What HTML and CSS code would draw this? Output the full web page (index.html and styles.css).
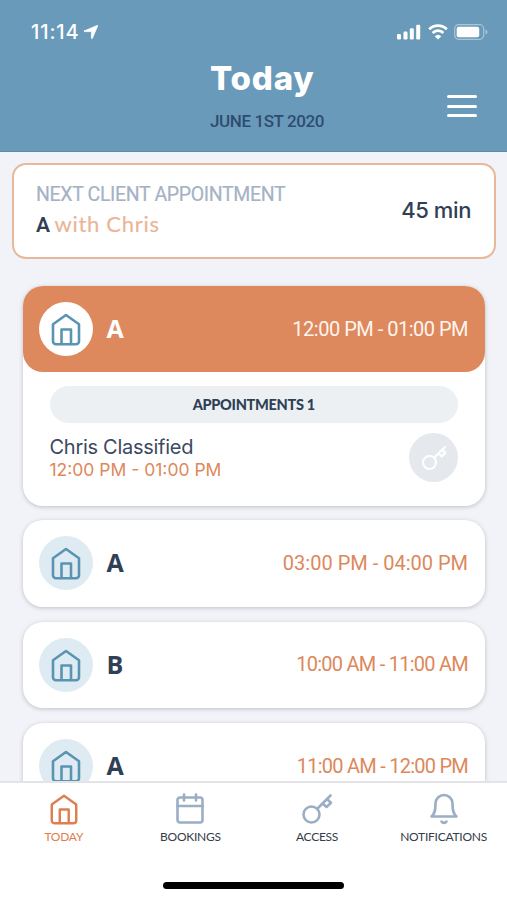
FILE: index.html
```html
<!DOCTYPE html>
<html lang="en">
<head>
<meta charset="utf-8">
<meta name="viewport" content="width=device-width, initial-scale=1">
<title>Today</title>
<link rel="stylesheet" href="styles.css">
</head>
<body>
<svg class="defs" width="0" height="0" aria-hidden="true">
  <symbol id="home" viewBox="0 0 32 34"><path d="M3 12.2 16 3l13 9.2v17a3 3 0 0 1-3 3H6a3 3 0 0 1-3-3z"/><path d="M11.5 32V17.5h9.500V32"/></symbol>
  <symbol id="calendar" viewBox="0 0 30 32"><rect x="2.500" y="4.500" width="25" height="25" rx="2.500"/><path d="M2.500 13h25M9 1.500v6M21 1.500v6"/></symbol>
  <symbol id="key" viewBox="0 0 32 32"><circle cx="10.500" cy="21.500" r="8"/><path d="M16.500 15.500 29.500 2.500M26.500 6.500l3.500 3.200-4.500 4.300-4-3.500"/></symbol>
  <symbol id="bell" viewBox="0 0 30 32"><path d="M2.500 23.500c3.500-3 4-6.500 4-13a8.500 8.500 0 0 1 17 0c0 6.500.5 10 4 13zM12.500 28.500a3 3 0 0 0 5 0"/></symbol>
</svg>
<div class="app">
  <header class="header">
    <div class="status">
      <span class="clock">11:14</span>
      <svg class="location" viewBox="0 0 14 14"><path d="M.4 5.900 13.200.4Q14 .2 13.600 1L8.300 13.400Q7.700 14.300 7.400 13.200V7.200Q7.400 6.600 6.800 6.600H.7Q-.5 6.400.4 5.900z"/></svg>
      <svg class="signal" viewBox="0 0 24 16"><rect x="0" y="10" width="4" height="5.500" rx="1.200"/><rect x="6.500" y="7.500" width="4" height="8" rx="1.200"/><rect x="12.800" y="4.200" width="4" height="11.300" rx="1.200"/><rect x="19.200" y=".8" width="4" height="14.700" rx="1.200"/></svg>
      <svg class="wifi" viewBox="0 0 20 16"><path d="M1.200 5.300a12.300 12.300 0 0 1 17.600 0M4.600 9a7.500 7.500 0 0 1 10.800 0"/><path class="dot" d="M10 15.500 6.700 12.300a4.800 4.800 0 0 1 6.600 0z"/></svg>
      <svg class="battery" viewBox="0 0 34 16"><rect class="shell" x=".7" y=".7" width="29" height="14.600" rx="4"/><rect x="2.700" y="2.700" width="22.500" height="10.600" rx="2"/><path class="cap" d="M31.500 5.500q2 .6 2 2.500t-2 2.500z"/></svg>
    </div>
    <div class="heading">
      <div>
        <h1>Today</h1>
        <p class="date">JUNE 1ST 2020</p>
      </div>
      <button class="menu" aria-label="Menu"><i></i><i></i><i></i></button>
    </div>
  </header>
  <main class="content">
    <section class="next">
      <div>
        <p class="next-label">NEXT CLIENT APPOINTMENT</p>
        <p class="next-client"><b>A</b> with Chris</p>
      </div>
      <span class="remaining">45 min</span>
    </section>
    <div class="list">
      <article class="card open">
        <div class="row">
          <span class="avatar"><svg><use href="#home"/></svg></span>
          <b class="name">A</b>
          <span class="time tight">12:00 PM - 01:00 PM</span>
        </div>
        <div class="details">
          <div class="pill"><span>APPOINTMENTS 1</span></div>
          <div class="booking">
            <div>
              <p class="person">Chris Classified</p>
              <p class="slot">12:00 PM - 01:00 PM</p>
            </div>
            <span class="key"><svg><use href="#key"/></svg></span>
          </div>
        </div>
      </article>
      <article class="card"><div class="row">
        <span class="avatar"><svg><use href="#home"/></svg></span>
        <b class="name">A</b>
        <span class="time">03:00 PM - 04:00 PM</span>
      </div></article>
      <article class="card"><div class="row">
        <span class="avatar"><svg><use href="#home"/></svg></span>
        <b class="name">B</b>
        <span class="time tighter">10:00 AM - 11:00 AM</span>
      </div></article>
      <article class="card"><div class="row">
        <span class="avatar"><svg><use href="#home"/></svg></span>
        <b class="name">A</b>
        <span class="time tighter">11:00 AM - 12:00 PM</span>
      </div></article>
    </div>
  </main>
  <footer class="footer">
    <nav class="tabs">
      <a class="tab active"><svg><use href="#home"/></svg><span>TODAY</span></a>
      <a class="tab"><svg><use href="#calendar"/></svg><span>BOOKINGS</span></a>
      <a class="tab"><svg><use href="#key"/></svg><span>ACCESS</span></a>
      <a class="tab"><svg><use href="#bell"/></svg><span>NOTIFICATIONS</span></a>
    </nav>
    <div class="indicator"></div>
  </footer>
</div>
</body>
</html>
```
FILE: styles.css
```css
* { box-sizing: border-box; }
body, h1, p { margin: 0; }
body { font-family: Lato, "Liberation Sans", sans-serif; color: #2f4056; background: #f2f3f8; }
.defs { display: block; }
.app { height: 900px; display: flex; flex-direction: column; overflow: hidden; }
svg { display: block; fill: none; stroke: currentColor; stroke-width: 2.6; stroke-linecap: round; stroke-linejoin: round; }

.header { height: 152px; flex: none; background: #6a9aba; border-bottom: 1px solid #6389a5; color: #fff; }
.status { height: 62px; padding: 20px 20px 0 31px; display: flex; align-items: flex-start; }
.status svg { fill: #fff; stroke: none; }
.clock { font: 500 20px/24px Inter, sans-serif; letter-spacing: .9px; }
.location { width: 14px; height: 14px; margin: 5px 0 0 4px; }
.status .location { stroke: #fff; stroke-width: .8; }
.signal { width: 24px; height: 16px; margin: 4px 0 0 auto; }
.status .wifi { width: 20px; height: 16px; margin: 4px 0 0 7px; fill: none; stroke: #fff; stroke-width: 2.7; stroke-linecap: butt; }
.status .wifi .dot { fill: #fff; stroke: none; }
.battery { width: 34px; height: 16px; margin: 4px -1px 0 6px; }
.battery .shell { fill: none; stroke: #a9c5d8; stroke-width: 1.2; }
.battery .cap { fill: #a9c5d8; }
.heading { display: flex; justify-content: space-between; padding: 0 30px 0 210px; }
h1 { font: 800 33px/32px Inter, sans-serif; letter-spacing: .8px; white-space: nowrap; }
.date { font: 500 17px/20px Roboto, sans-serif; letter-spacing: -.4px; margin-top: 17px; color: #2d4d70; white-space: nowrap; }
.menu { width: 30px; height: 22px; margin: 33px 0 0; padding: 0; border: 0; background: none; display: flex; flex-direction: column; justify-content: space-between; }
.menu i { height: 3px; border-radius: 2px; background: #fff; }

.content { flex: 1; min-height: 0; overflow: hidden; padding: 11px 11px 0 12px; }
.next { height: 96px; padding: 0 23px 0 22px; display: flex; justify-content: space-between; background: #fff; border: 2px solid #e9b799; border-radius: 14px; white-space: nowrap; }
.next-label { font: 400 19.500px/24px Roboto, sans-serif; letter-spacing: -.35px; margin-top: 18px; color: #a5b2c6; -webkit-text-stroke: .2px #a5b2c6; }
.next-client { font-size: 22px; line-height: 28px; letter-spacing: .7px; margin-top: 3px; color: #ebb496; -webkit-text-stroke: .15px #ebb496; }
.next-client b { font: 600 21px/28px Roboto, sans-serif; letter-spacing: -1.4px; color: #2f4056; -webkit-text-stroke: 0; }
.remaining { font: 500 22px/28px Inter, sans-serif; letter-spacing: -.4px; margin-top: 31px; }

.list { display: flex; flex-direction: column; gap: 15px; margin: 27px 11px 0 10.500px; }
.card { flex: none; height: 86.500px; background: #fff; border-radius: 20px; box-shadow: 0 1px 4px rgba(40, 45, 60, .26); }
.card.open { height: 220px; margin-bottom: -1px; }
.row { height: 86px; padding: 0 17px 0 16px; display: flex; align-items: center; border-radius: 20px; white-space: nowrap; }
.avatar { width: 54px; height: 54px; border-radius: 50%; display: grid; place-items: center; background: #deebf2; color: #5b93b2; }
.avatar svg { width: 32px; height: 34px; }
.name { font: 700 25px/30px "Open Sans", sans-serif; margin: -2px 0 0 14px; }
.time { font: 400 20px/24px Roboto, sans-serif; margin: -1px 0 0 auto; color: #dd885b; }
.tight { letter-spacing: -.5px; }
.tighter { letter-spacing: -.75px; }
.open .row { background: #dd895d; color: #fff; }
.open .avatar { background: #fff; }
.open .time { color: #fff5ee; }
.details { padding: 14px 27px 0; }
.pill { height: 37px; border-radius: 19px; background: #ecf0f3; text-align: center; font-weight: 900; font-size: 14.500px; line-height: 37px; letter-spacing: -.3px; }
.booking { display: flex; justify-content: space-between; white-space: nowrap; }
.person { font: 400 20px/24px Inter, sans-serif; letter-spacing: -.28px; margin-top: 12px; color: #3b4962; }
.slot { font: 400 17.500px/21px Inter, sans-serif; color: #dd885b; }
.key { width: 49px; height: 49px; margin-top: 10px; border-radius: 50%; display: grid; place-items: center; background: #e5e9ee; color: #fff; }
.key svg { width: 26px; height: 26px; }

.footer { height: 119px; flex: none; background: #fff; border-top: 2px solid #e2e4e8; }
.tabs { display: grid; grid-template-columns: repeat(4, 126.600px); height: 99px; margin-left: .5px; }
.tab { display: flex; flex-direction: column; align-items: center; padding-top: 10px; color: #9baec4; }
.tab svg { width: 32px; height: 32px; }
.tab span { font-size: 12px; line-height: 16px; letter-spacing: -.25px; margin-top: 4px; color: #333c48; white-space: nowrap; }
.tab.active, .tab.active span { color: #df7e50; }
.indicator { width: 181px; height: 7px; margin: 0 auto; border-radius: 4px; background: #000; }
```
